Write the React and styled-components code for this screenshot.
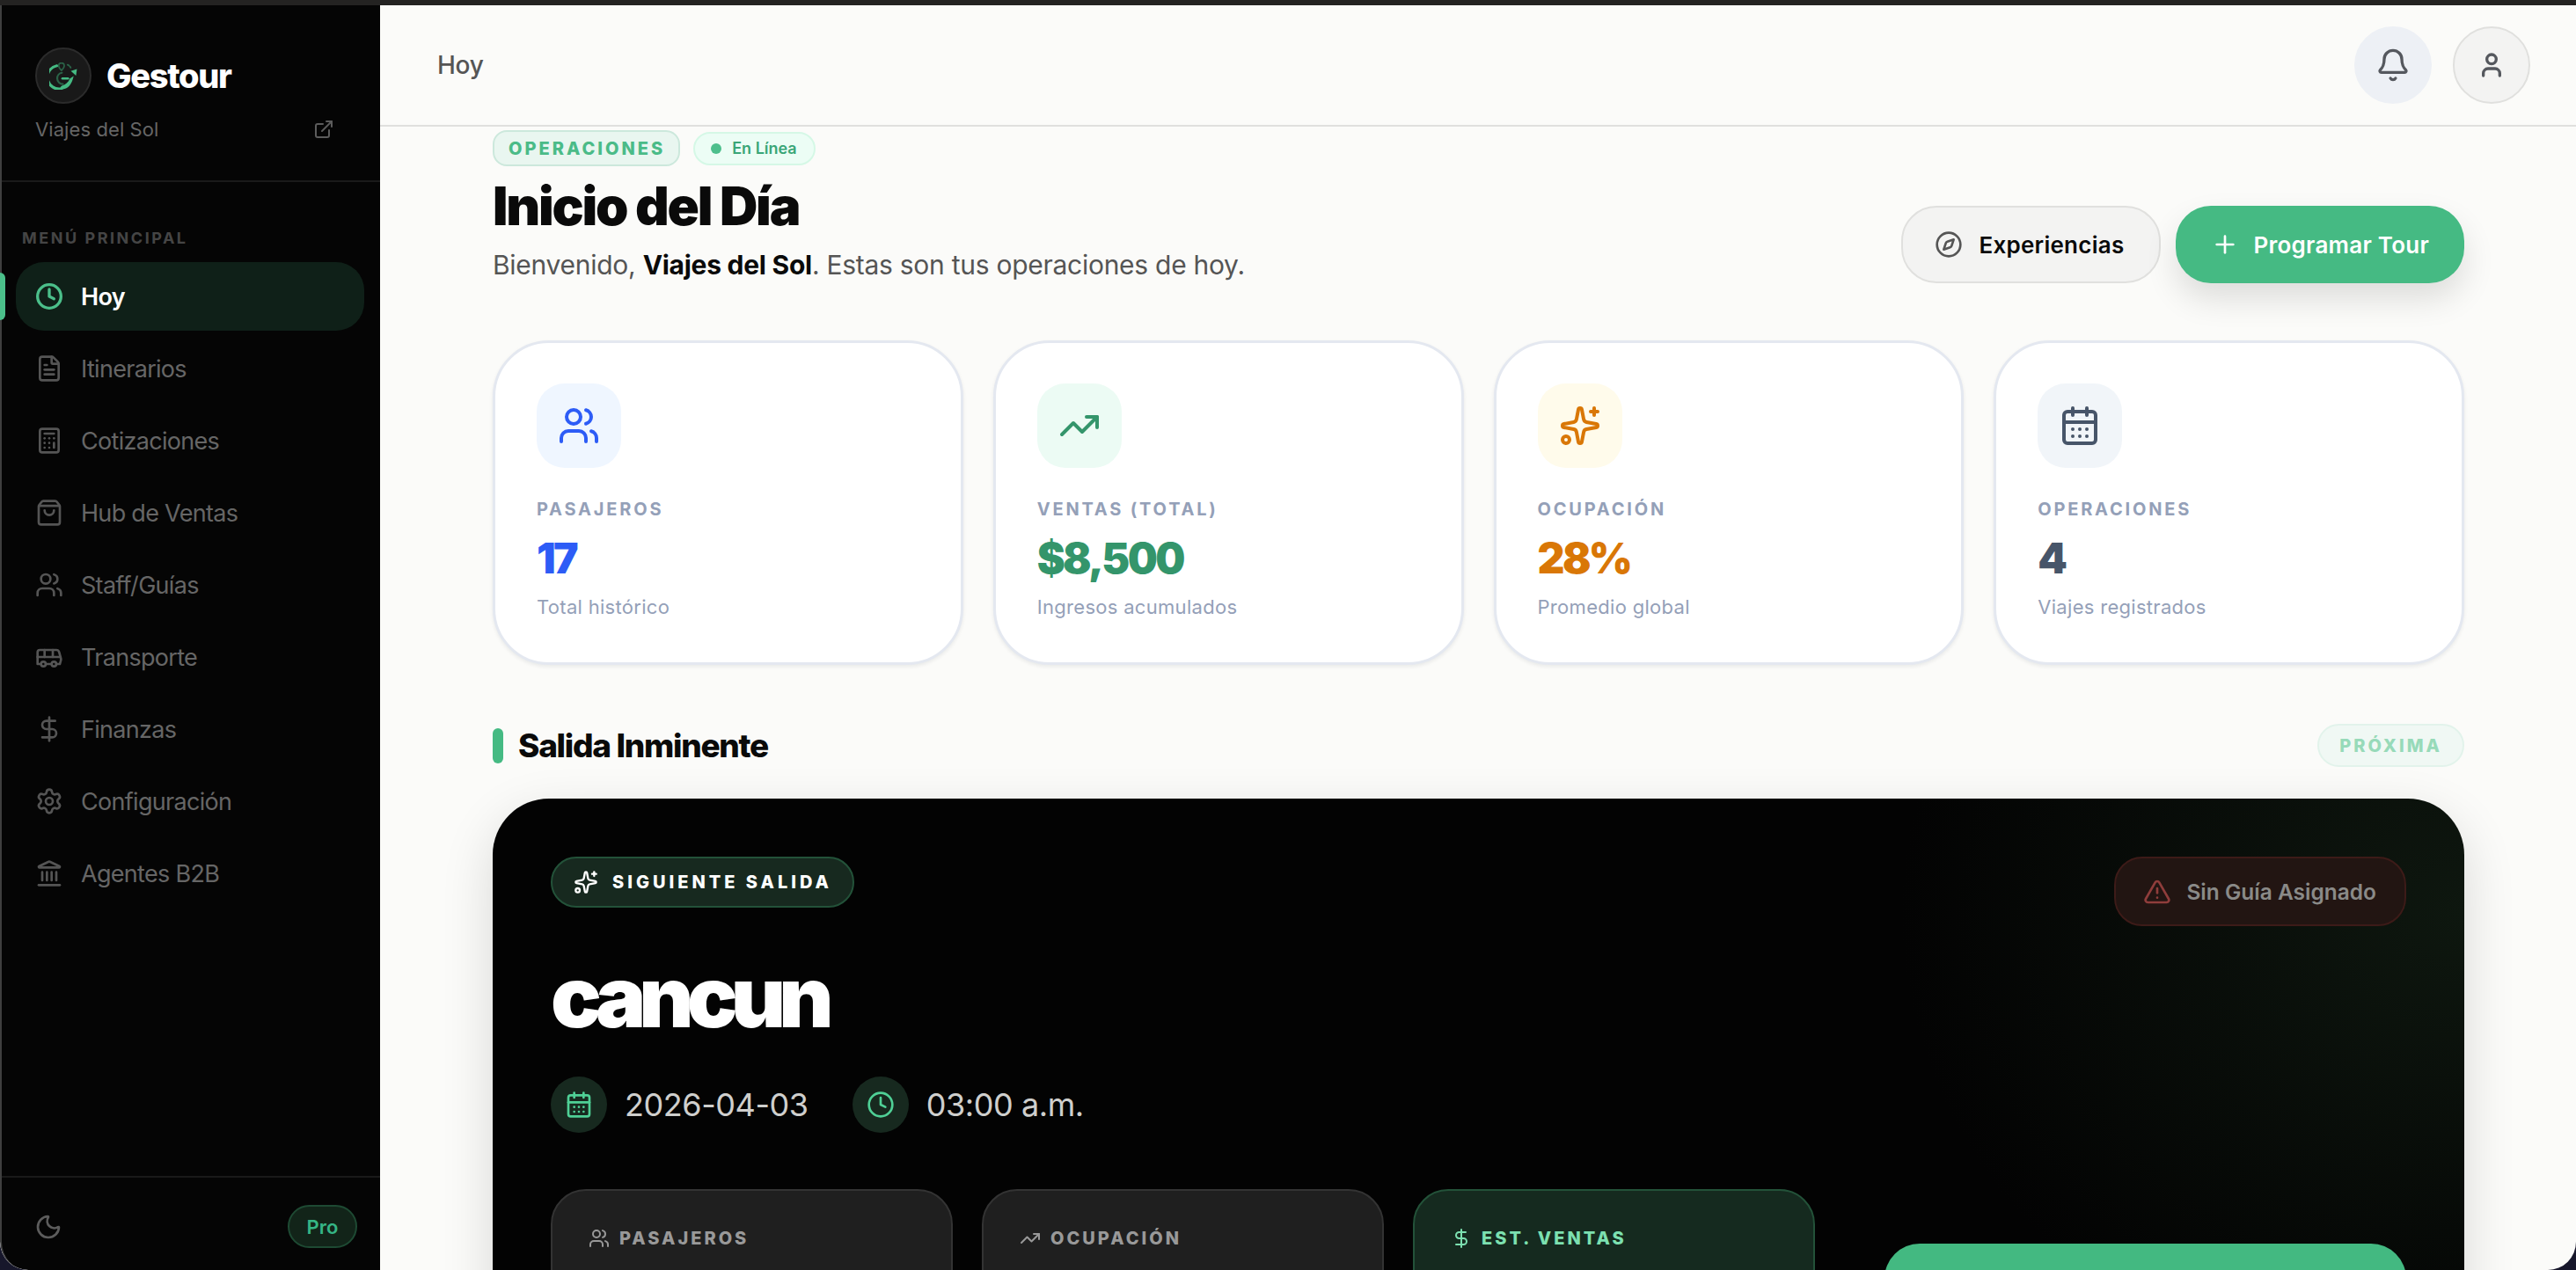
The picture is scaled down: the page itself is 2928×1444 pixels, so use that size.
import React from "react";
import styled, { createGlobalStyle } from "styled-components";
import {
  Bell, Bus, Calculator, CalendarDays, Clock, Compass, DollarSign, ExternalLink, FileText,
  Landmark, Moon, Plus, Settings, ShoppingBag, Sparkles, TrendingUp, TriangleAlert, User, Users,
} from "lucide-react";

const GlobalStyle = createGlobalStyle`
  html, body { margin: 0; padding: 0; height: 100%; overflow: hidden; background: #17172b; }
  * { box-sizing: border-box; }
  body { font-family: "Inter", "Liberation Sans", sans-serif; }
`;

const Frame = styled.div`
  height: 100vh;
  display: flex;
  flex-direction: column;
  overflow: hidden;
  border-radius: 0 0 32px 32px;
  border-top: 6px solid #242322;
  background: #fbfbf9;
`;

const Body = styled.div`
  flex: 1;
  display: flex;
  min-height: 0;
`;

const Sidebar = styled.aside`
  width: 432px;
  flex-shrink: 0;
  display: flex;
  flex-direction: column;
  background: #050505;
  border-left: 2px solid #3f3f3f;
  border-bottom-left-radius: 32px;
`;

const Brand = styled.div`
  height: 201px;
  padding: 48px 52px 0 38px;
  border-bottom: 2px solid #1a1a1a;
`;

const BrandRow = styled.div`
  display: flex;
  align-items: center;
  gap: 17px;
`;

const LogoBadge = styled.div`
  width: 64px;
  height: 64px;
  border-radius: 50%;
  background: #191919;
  border: 2px solid #2b2b2b;
  display: flex;
  align-items: center;
  justify-content: center;
`;

const BrandName = styled.div`
  color: #fff;
  font-size: 38px;
  line-height: 46px;
  font-weight: 800;
  letter-spacing: -0.035em;
`;

const CompanyRow = styled.div`
  display: flex;
  align-items: center;
  justify-content: space-between;
  margin-top: 11px;
  color: #666;
  font-size: 22px;
  line-height: 36px;
  letter-spacing: 0.004em;
`;

const Nav = styled.nav`
  flex: 1;
  padding: 0 18px 0 16px;
`;

const NavTitle = styled.div`
  padding: 52px 0 0 7px;
  height: 91px;
  color: #454545;
  font-size: 18px;
  line-height: 24px;
  font-weight: 700;
  letter-spacing: 0.14em;
`;

const NavList = styled.div`
  display: flex;
  flex-direction: column;
  gap: 4px;
`;

const NavItem = styled.a`
  position: relative;
  height: 78px;
  padding-left: 22px;
  display: flex;
  align-items: center;
  gap: 20px;
  border-radius: 32px;
  font-size: 27px;
  letter-spacing: -0.7px;
  font-weight: ${(p) => (p.$active ? 600 : 400)};
  color: ${(p) => (p.$active ? "#fff" : "#666")};
  background: ${(p) => (p.$active ? "#0f2018" : "transparent")};
  svg { color: ${(p) => (p.$active ? "#4bbf8a" : "#555")}; flex-shrink: 0; }
`;

const ActiveMark = styled.span`
  position: absolute;
  left: -18px;
  top: 12px;
  width: 6px;
  height: 54px;
  border-radius: 0 6px 6px 0;
  background: #4bbf8a;
`;

const SideFooter = styled.div`
  height: 107px;
  padding: 6px 26px 0 37px;
  display: flex;
  align-items: center;
  justify-content: space-between;
  border-top: 2px solid #1a1a1a;
  color: #5c5c5c;
`;

const ProBadge = styled.span`
  width: 79px;
  height: 49px;
  border-radius: 25px;
  display: flex;
  align-items: center;
  justify-content: center;
  background: #122419;
  border: 2px solid #1e4a33;
  color: #35b585;
  font-size: 22px;
  font-weight: 600;
`;

const Main = styled.main`
  flex: 1;
  min-width: 0;
  display: flex;
  flex-direction: column;
`;

const TopBar = styled.header`
  height: 138px;
  flex-shrink: 0;
  padding: 0 52px 0 65px;
  display: flex;
  align-items: center;
  justify-content: space-between;
  border-bottom: 2px solid #e0e0de;
`;

const TopTitle = styled.div`
  color: #555;
  font-size: 28px;
  font-weight: 500;
  letter-spacing: -0.3px;
`;

const TopActions = styled.div`
  display: flex;
  gap: 24px;
`;

const RoundButton = styled.button`
  width: 88px;
  height: 88px;
  padding: 0;
  border-radius: 50%;
  display: flex;
  align-items: center;
  justify-content: center;
  color: #55585e;
  background: ${(p) => (p.$tint ? "#edf0f5" : "#f3f3f2")};
  border: 2px solid ${(p) => (p.$tint ? "#edf0f5" : "#e0e0de")};
`;

const Content = styled.div`
  flex: 1;
  min-height: 0;
  overflow: hidden;
  padding: 4px 127px 0 128px;
`;

const Intro = styled.section`
  display: flex;
  align-items: flex-end;
  justify-content: space-between;
`;

const PillRow = styled.div`
  display: flex;
  align-items: center;
  gap: 15px;
`;

const SectionPill = styled.span`
  height: 41px;
  padding: 0 15px 0 16px;
  display: inline-flex;
  align-items: center;
  border-radius: 16px;
  background: #e9f6f0;
  border: 2px solid #cce8dc;
  color: #4bbb88;
  font-size: 20px;
  font-weight: 800;
  letter-spacing: 0.15em;
`;

const StatusPill = styled.span`
  height: 38px;
  padding: 0 19px 0 18px;
  display: inline-flex;
  align-items: center;
  gap: 12px;
  border-radius: 19px;
  background: #ecfdf5;
  border: 2px solid #d5f8e6;
  color: #3aa677;
  font-size: 18px;
  font-weight: 600;
`;

const StatusDot = styled.i`
  width: 12px;
  height: 12px;
  border-radius: 50%;
  background: #4dbf8c;
`;

const PageTitle = styled.h1`
  margin: 9px 0 0;
  color: #0a0a0a;
  font-size: 60px;
  line-height: 72px;
  font-weight: 900;
  letter-spacing: -0.037em;
`;

const Subtitle = styled.p`
  margin: 9px 0 0;
  color: #555;
  font-size: 30px;
  line-height: 44px;
  letter-spacing: -0.27px;
  b { color: #0a0a0a; font-weight: 700; }
`;

const IntroActions = styled.div`
  display: flex;
  gap: 17px;
  margin-bottom: 1px;
`;

const ActionButton = styled.button`
  height: 88px;
  padding: ${(p) => (p.$primary ? "0 40px" : "0 40px 0 36px")};
  display: flex;
  align-items: center;
  gap: ${(p) => (p.$primary ? 16 : 18)}px;
  border-radius: 40px;
  font-family: inherit;
  font-size: 26px;
  letter-spacing: 0.25px;
  font-weight: 600;
  color: ${(p) => (p.$primary ? "#fff" : "#0a0a0a")};
  background: ${(p) => (p.$primary ? "#45ba83" : "#f3f3f2")};
  border: ${(p) => (p.$primary ? "none" : "2px solid #e0e0de")};
  box-shadow: ${(p) => (p.$primary ? "0 18px 36px rgba(0,0,0,0.12)" : "none")};
  svg { color: ${(p) => (p.$primary ? "#fff" : "#555")}; }
`;

const StatGrid = styled.section`
  margin-top: 64px;
  display: grid;
  grid-template-columns: repeat(4, 1fr);
  gap: 34px;
`;

const StatCard = styled.article`
  height: 369px;
  padding: 46px 47px 0;
  border-radius: 64px;
  background: #fff;
  border: 3px solid #e4e8f0;
  box-shadow: 0 2px 4px rgba(15, 23, 42, 0.08);
`;

const StatIcon = styled.div`
  width: 96px;
  height: 96px;
  border-radius: 32px;
  display: flex;
  align-items: center;
  justify-content: center;
  background: ${(p) => p.$bg};
  color: ${(p) => p.$color};
`;

const StatLabel = styled.div`
  margin-top: 35px;
  color: #94a0b8;
  font-size: 20px;
  line-height: 24px;
  font-weight: 700;
  letter-spacing: 0.14em;
`;

const StatValue = styled.div`
  margin-top: 14px;
  color: ${(p) => p.$color};
  font-size: 48px;
  line-height: 60px;
  font-weight: 900;
  letter-spacing: -0.055em;
`;

const StatNote = styled.div`
  margin-top: 10px;
  color: #94a0b8;
  font-size: 22px;
  line-height: 30px;
  letter-spacing: 0.3px;
`;

const SectionHead = styled.section`
  margin-top: 67px;
  height: 49px;
  display: flex;
  align-items: center;
  justify-content: space-between;
`;

const SectionName = styled.h2`
  margin: 0;
  display: flex;
  align-items: center;
  gap: 17px;
  color: #0a0a0a;
  font-size: 37px;
  font-weight: 800;
  letter-spacing: -0.035em;
`;

const SectionBar = styled.i`
  width: 12px;
  height: 40px;
  border-radius: 6px;
  background: #45ba83;
`;

const NextPill = styled.span`
  height: 49px;
  padding: 0 23px;
  display: inline-flex;
  align-items: center;
  border-radius: 25px;
  background: #f0f8f4;
  border: 2px solid #e2f3eb;
  color: #97dab9;
  font-size: 20px;
  font-weight: 800;
  letter-spacing: 0.15em;
`;

const Hero = styled.section`
  margin-top: 36px;
  height: 800px;
  padding: 66px;
  border-radius: 64px;
  background:
    radial-gradient(640px 560px at 100% 130px, #0e170f 0%, rgba(14, 23, 15, 0) 100%),
    #030303;
  box-shadow: 0 20px 60px rgba(0, 0, 0, 0.14);
`;

const HeroTop = styled.div`
  display: flex;
  align-items: flex-start;
  justify-content: space-between;
`;

const NextBadge = styled.span`
  height: 58px;
  padding: 0 23px 0 24px;
  display: inline-flex;
  align-items: center;
  gap: 16px;
  border-radius: 29px;
  background: #17291f;
  border: 2px solid #235239;
  color: #fff;
  font-size: 20px;
  font-weight: 800;
  letter-spacing: 0.2em;
`;

const AlertBadge = styled.span`
  height: 79px;
  padding: 0 32px 0 31px;
  display: inline-flex;
  align-items: center;
  gap: 17px;
  border-radius: 32px;
  background: #221512;
  border: 2px solid #3d1b18;
  color: #8a8a88;
  font-size: 24.5px;
  font-weight: 600;
  svg { color: #8f3d3b; }
`;

const HeroTitle = styled.h2`
  margin: 32px 0 0;
  color: #fff;
  font-size: 96px;
  line-height: 96px;
  font-weight: 900;
  letter-spacing: -0.082em;
`;

const MetaRow = styled.div`
  margin-top: 43px;
  display: flex;
  gap: 50px;
`;

const MetaItem = styled.div`
  display: flex;
  align-items: center;
  gap: 20px;
  color: #cfcfcd;
  font-size: 36px;
  letter-spacing: -0.012em;
`;

const MetaIcon = styled.span`
  width: 64px;
  height: 64px;
  border-radius: 50%;
  display: flex;
  align-items: center;
  justify-content: center;
  background: #17291f;
  color: #4fd096;
`;

const HeroBottom = styled.div`
  margin-top: 64px;
  display: flex;
  align-items: flex-start;
  justify-content: space-between;
`;

const TripStats = styled.div`
  display: grid;
  grid-template-columns: repeat(3, 457px);
  gap: 33px;
`;

const TripStat = styled.div`
  height: 200px;
  padding: 40px 41px;
  border-radius: 40px;
  background: ${(p) => (p.$green ? "#152a1f" : "#1f1f1f")};
  border: 2px solid ${(p) => (p.$green ? "#235239" : "#333")};
`;

const TripLabel = styled.div`
  display: flex;
  align-items: center;
  gap: 11px;
  color: ${(p) => (p.$green ? "#7ce0b0" : "#999")};
  font-size: 20px;
  line-height: 28px;
  font-weight: 800;
  letter-spacing: 0.15em;
`;

const DetailButton = styled.button`
  width: 593px;
  height: 122px;
  margin-top: 62px;
  border: none;
  border-radius: 40px;
  background: #43b981;
`;

const navItems = [
  { label: "Hoy", icon: Clock, active: true },
  { label: "Itinerarios", icon: FileText },
  { label: "Cotizaciones", icon: Calculator },
  { label: "Hub de Ventas", icon: ShoppingBag },
  { label: "Staff/Guías", icon: Users },
  { label: "Transporte", icon: Bus },
  { label: "Finanzas", icon: DollarSign },
  { label: "Configuración", icon: Settings },
  { label: "Agentes B2B", icon: Landmark },
];

const stats = [
  { label: "PASAJEROS", value: "17", note: "Total histórico", icon: Users, color: "#2d5cf6", bg: "#eff6ff" },
  { label: "VENTAS (TOTAL)", value: "$8,500", note: "Ingresos acumulados", icon: TrendingUp, color: "#34956b", bg: "#ecfbf4" },
  { label: "OCUPACIÓN", value: "28%", note: "Promedio global", icon: Sparkles, color: "#d97706", bg: "#fffbeb" },
  { label: "OPERACIONES", value: "4", note: "Viajes registrados", icon: CalendarDays, color: "#475569", bg: "#f1f5f9" },
];

const tripStats = [
  { label: "PASAJEROS", icon: Users },
  { label: "OCUPACIÓN", icon: TrendingUp },
  { label: "EST. VENTAS", icon: DollarSign, green: true },
];

// logo: G ring, inner dark arc, map pin on top, leaf swoosh ending in an arrow
function Logo() {
  return (
    <svg width="32" height="31" viewBox="0 0 30 29" fill="none" strokeLinecap="round">
      <path d="M8 3.5A12.5 12.5 0 0 0 13 28" stroke="#45ba83" strokeWidth="3" />
      <path d="M8.5 17a6 6 0 0 1 5-6" stroke="#2a6247" strokeWidth="2" />
      <path d="M8.5 17a6 6 0 0 0 6 6" stroke="#2a6247" strokeWidth="2" />
      <path d="M12 28.5c8 .5 12-5 14-14l-4 2.5c-1.500 4-5 6.500-8 7.500-2 .8-2.500 2.500-2 4z" fill="#45ba83" />
      <path d="M23 9l6.500-2-1 7z" fill="#45ba83" />
      <path d="M14 17h6" stroke="#45ba83" strokeWidth="2.4" />
      <path d="M13 8.500c-2-2-3-3.500-3-5a3 3 0 0 1 6 0c0 1.500-1 3-3 5z" stroke="#2a6247" strokeWidth="1.600" />
      <path d="M19.500 2.500c1.500.6 2.500 1.500 3.300 3" stroke="#2a6247" strokeWidth="1.800" strokeDasharray="2 1.500" />
    </svg>
  );
}

export default function App() {
  return (
    <>
      <GlobalStyle />
      <Frame>
        <Body>
          <Sidebar>
            <Brand>
              <BrandRow>
                <LogoBadge><Logo /></LogoBadge>
                <BrandName>Gestour</BrandName>
              </BrandRow>
              <CompanyRow>
                Viajes del Sol
                <ExternalLink size={24} color="#5c5c5c" />
              </CompanyRow>
            </Brand>
            <Nav>
              <NavTitle>MENÚ PRINCIPAL</NavTitle>
              <NavList>
                {navItems.map((item) => (
                  <NavItem key={item.label} $active={item.active}>
                    {item.active && <ActiveMark />}
                    <item.icon size={32} strokeWidth={item.active ? 2.5 : 2} />
                    {item.label}
                  </NavItem>
                ))}
              </NavList>
            </Nav>
            <SideFooter>
              <Moon size={32} />
              <ProBadge>Pro</ProBadge>
            </SideFooter>
          </Sidebar>
          <Main>
            <TopBar>
              <TopTitle>Hoy</TopTitle>
              <TopActions>
                <RoundButton $tint><Bell size={40} /></RoundButton>
                <RoundButton><User size={32} strokeWidth={2.5} /></RoundButton>
              </TopActions>
            </TopBar>
            <Content>
              <Intro>
                <div>
                  <PillRow>
                    <SectionPill>OPERACIONES</SectionPill>
                    <StatusPill><StatusDot />En Línea</StatusPill>
                  </PillRow>
                  <PageTitle>Inicio del Día</PageTitle>
                  <Subtitle>Bienvenido, <b>Viajes del Sol</b>. Estas son tus operaciones de hoy.</Subtitle>
                </div>
                <IntroActions>
                  <ActionButton><Compass size={32} />Experiencias</ActionButton>
                  <ActionButton $primary><Plus size={32} />Programar Tour</ActionButton>
                </IntroActions>
              </Intro>

              <StatGrid>
                {stats.map((s) => (
                  <StatCard key={s.label}>
                    <StatIcon $bg={s.bg} $color={s.color}><s.icon size={48} /></StatIcon>
                    <StatLabel>{s.label}</StatLabel>
                    <StatValue $color={s.color}>{s.value}</StatValue>
                    <StatNote>{s.note}</StatNote>
                  </StatCard>
                ))}
              </StatGrid>

              <SectionHead>
                <SectionName><SectionBar />Salida Inminente</SectionName>
                <NextPill>PRÓXIMA</NextPill>
              </SectionHead>

              <Hero>
                <HeroTop>
                  <NextBadge><Sparkles size={28} />SIGUIENTE SALIDA</NextBadge>
                  <AlertBadge><TriangleAlert size={32} />Sin Guía Asignado</AlertBadge>
                </HeroTop>
                <HeroTitle>cancun</HeroTitle>
                <MetaRow>
                  <MetaItem><MetaIcon><CalendarDays size={32} /></MetaIcon>2026-04-03</MetaItem>
                  <MetaItem><MetaIcon><Clock size={32} /></MetaIcon>03:00 a.m.</MetaItem>
                </MetaRow>
                <HeroBottom>
                  <TripStats>
                    {tripStats.map((t) => (
                      <TripStat key={t.label} $green={t.green}>
                        <TripLabel $green={t.green}><t.icon size={24} />{t.label}</TripLabel>
                      </TripStat>
                    ))}
                  </TripStats>
                  <DetailButton />
                </HeroBottom>
              </Hero>
            </Content>
          </Main>
        </Body>
      </Frame>
    </>
  );
}
